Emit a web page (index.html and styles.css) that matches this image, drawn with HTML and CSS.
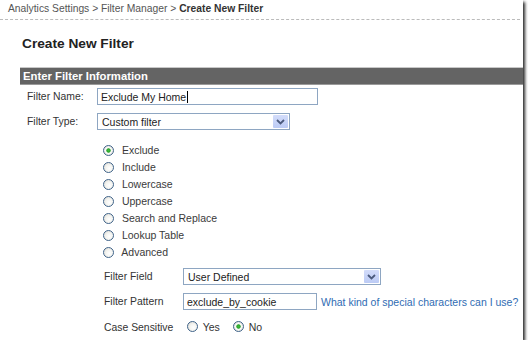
FILE: index.html
```html
<!DOCTYPE html>
<html lang="en">
<head>
    <meta charset="UTF-8">
    <title>Create New Filter</title>
    <link rel="stylesheet" href="styles.css">
</head>
<body>
    <div class="frame">
        <!-- Breadcrumb trail -->
        <div class="breadcrumb">Analytics Settings &gt; Filter Manager &gt; <b>Create New Filter</b></div>

        <h1 class="page-title">Create New Filter</h1>

        <div class="section">
            <div class="section-head">Enter Filter Information</div>

            <div class="form-row">
                <label class="form-label" for="filter-name">Filter Name:</label>
                <input class="text-input name-input" id="filter-name" type="text" value="Exclude My Home"><span class="caret"></span>
            </div>

            <div class="form-row row-type">
                <span class="form-label">Filter Type:</span>
                <div class="select type-select">
                    <span class="select-value">Custom filter</span>
                    <span class="select-arrow">
                        <svg width="9" height="6" viewBox="0 0 9 6"><path d="M1 1 L4.5 4.5 L8 1" fill="none" stroke="#4b5a7d" stroke-width="1.8"/></svg>
                    </span>
                </div>
            </div>

            <!-- Custom filter types -->
            <ul class="radio-list">
                <li><label><input type="radio" name="ftype" checked> Exclude</label></li>
                <li><label><input type="radio" name="ftype"> Include</label></li>
                <li><label><input type="radio" name="ftype"> Lowercase</label></li>
                <li><label><input type="radio" name="ftype"> Uppercase</label></li>
                <li><label><input type="radio" name="ftype"> Search and Replace</label></li>
                <li><label><input type="radio" name="ftype"> Lookup Table</label></li>
                <li><label><input type="radio" name="ftype"> Advanced</label></li>
            </ul>

            <div class="sub-form">
                <span class="sub-label">Filter Field</span>
                <div class="select field-select">
                    <span class="select-value">User Defined</span>
                    <span class="select-arrow">
                        <svg width="9" height="6" viewBox="0 0 9 6"><path d="M1 1 L4.5 4.5 L8 1" fill="none" stroke="#4b5a7d" stroke-width="1.8"/></svg>
                    </span>
                </div>

                <span class="sub-label">Filter Pattern</span>
                <div class="pattern-cell">
                    <input class="text-input pattern-input" type="text" value="exclude_by_cookie">
                    <a class="help-link" href="#">What kind of special characters can I use?</a>
                </div>

                <span class="sub-label row-case">Case Sensitive</span>
                <div class="case-cell row-case">
                    <label class="case-option"><input type="radio" name="case"> Yes</label>
                    <label class="case-option"><input type="radio" name="case" checked> No</label>
                </div>
            </div>
        </div>
    </div>
</body>
</html>
```

FILE: styles.css
```css
/* Base */
* {
    margin: 0;
    padding: 0;
    box-sizing: border-box;
}

body {
    font-family: "Liberation Sans", Arial, sans-serif;
    font-size: 10.5px;
    color: #333;
    background: #fff;
}

/* Screenshot frame with drop shadow */
.frame {
    width: 523px;
    height: 340px;
    overflow: hidden;
    background: #fff;
    box-shadow: 2px 2px 3px rgba(0, 0, 0, 0.85);
}

/* Breadcrumb */
.breadcrumb {
    height: 20px;
    padding: 2px 0 0 8px;
    font-size: 10.3px;
    line-height: 13px;
    color: #555;
    border-bottom: 1px dashed #bbb;
    margin-right: 3px;
}

.breadcrumb b {
    color: #333;
}

.page-title {
    margin: 15px 0 0 22px;
    font-size: 13.7px;
    line-height: 17px;
    color: #222;
}

/* Section */
.section {
    margin: 15px 0 0 20px;
}

.section-head {
    height: 18px;
    padding-left: 3px;
    background: #646464;
    border-top: 1px solid #c8c8c8;
    border-bottom: 1px solid #9a9a9a;
    color: #fff;
    font-size: 11.3px;
    font-weight: bold;
    line-height: 16px;
}

.form-row {
    display: flex;
    align-items: center;
    height: 17px;
    margin-top: 3px;
    padding-left: 7px;
}

.row-type {
    margin-top: 8px;
}

.form-label {
    width: 70px;
    font-size: 10.4px;
}

/* Inputs */
.text-input {
    height: 17px;
    padding: 0 3px;
    border: 1px solid #8ea6c2;
    font-family: inherit;
    font-size: 10.5px;
    color: #222;
    outline: none;
}

.name-input {
    width: 221px;
}

.caret {
    width: 1px;
    height: 12px;
    background: #000;
    margin-left: -131px;
}

.select {
    display: flex;
    align-items: center;
    height: 17px;
    border: 1px solid #8ea6c2;
    padding: 0 1px 0 4px;
    color: #222;
}

.select-value {
    flex: 1;
}

.select-arrow {
    display: flex;
    align-items: center;
    justify-content: center;
    width: 15px;
    height: 13px;
    background: linear-gradient(#d3dcfa, #bccbf5);
    border-radius: 1px;
}

.type-select {
    width: 193px;
}

.field-select {
    width: 198px;
}

/* Radios */
input[type="radio"] {
    appearance: none;
    -webkit-appearance: none;
    width: 11px;
    height: 11px;
    border: 1px solid #3f6389;
    border-radius: 50%;
    background: radial-gradient(circle at 60% 60%, #fff 0%, #f4f4f0 45%, #d6d5cf 100%);
    vertical-align: middle;
    margin: 0 4px 0 0;
    position: relative;
    top: -1px;
}

input[type="radio"]:checked {
    background: radial-gradient(circle, #3dbb3d 0, #2ca42c 1.8px, #fff 2.6px, #f2f2ee 55%, #d6d5cf 100%);
}

.radio-list {
    list-style: none;
    margin: 12px 0 0 83px;
    color: #3a3a3a;
}

.radio-list li {
    height: 17px;
    line-height: 17px;
}

.radio-list input[type="radio"] {
    margin-right: 5px;
}

/* Sub form */
.sub-form {
    display: grid;
    grid-template-columns: 79px auto;
    grid-auto-rows: 17px;
    row-gap: 8px;
    align-items: center;
    margin: 7px 0 0 84px;
}

.sub-label {
    font-size: 10.4px;
}

.row-case {
    margin-top: 1px;
}

.pattern-cell {
    display: flex;
    align-items: center;
}

.pattern-input {
    width: 134px;
}

.help-link {
    margin-left: 4px;
    color: #2f6cb3;
    text-decoration: none;
}

.case-cell {
    display: flex;
    align-items: center;
    padding-left: 4px;
}

.case-option {
    margin-right: 13px;
}

.case-option input[type="radio"] {
    margin-right: 2px;
}
```
